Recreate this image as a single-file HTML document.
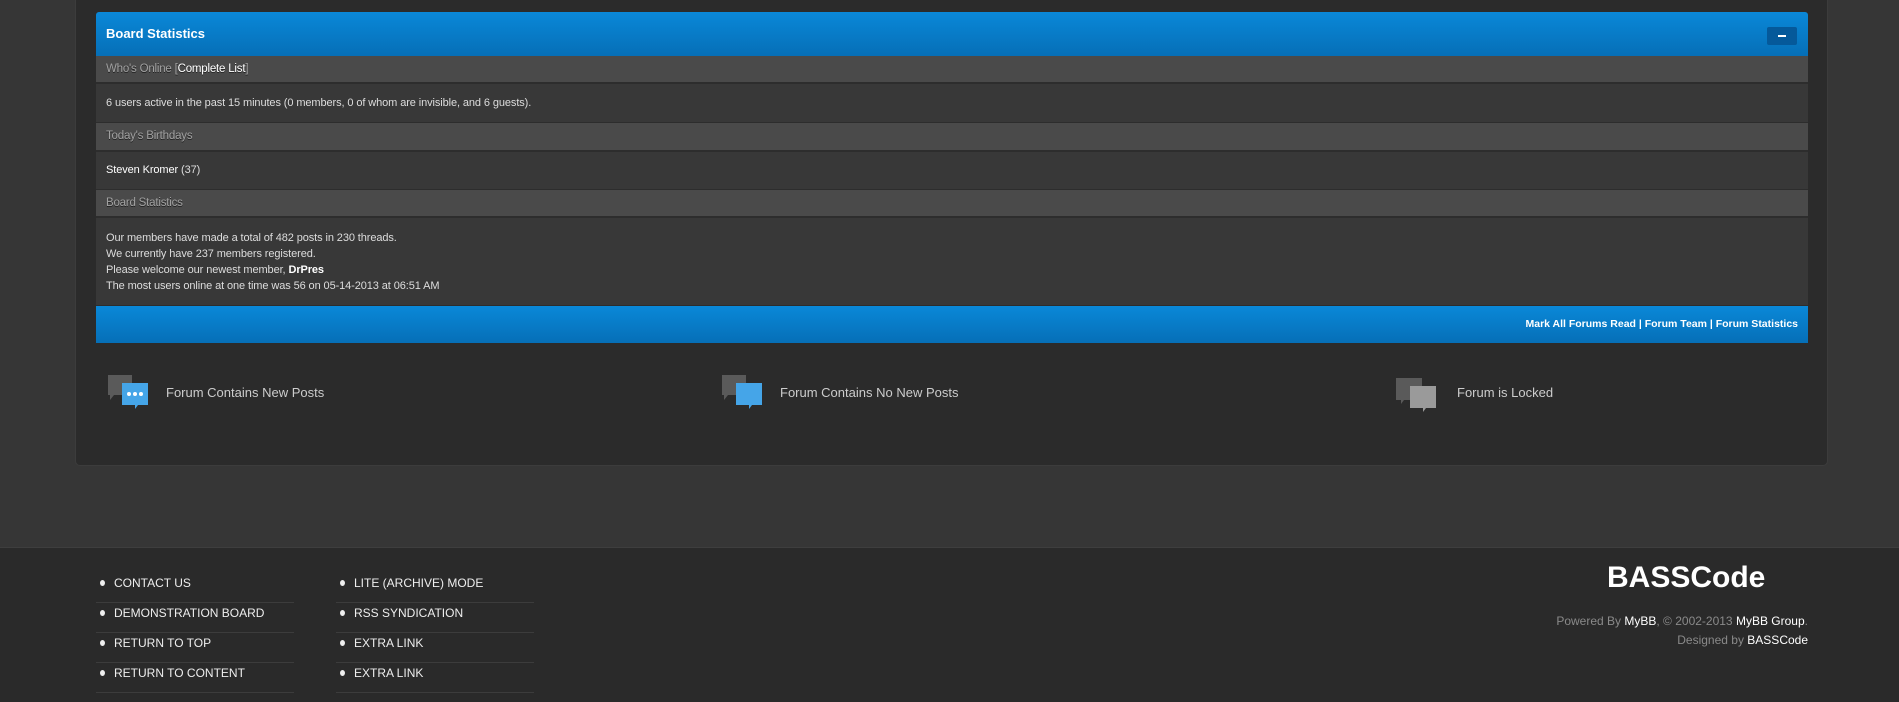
<!DOCTYPE html>
<html><head><meta charset="utf-8"><style>
*{margin:0;padding:0;box-sizing:border-box}
body{width:1899px;height:702px;overflow:hidden;background:#363636;font-family:"Liberation Sans",sans-serif;position:relative}
.panel{position:absolute;left:75px;top:-10px;width:1753px;height:476px;background:#2b2b2b;border:1px solid #3c3c3c;border-radius:0 0 5px 5px}
.tbl{position:absolute;left:96px;top:12px;width:1712px}
.head{height:44px;background:linear-gradient(#0a88d8,#066fb7);border-radius:3px 3px 0 0;position:relative;color:#fff;font-weight:bold;font-size:13px;line-height:44px;padding-left:10px}
.btn{position:absolute;left:1671px;top:15px;width:30px;height:18px;background:#05599a;border-radius:2px}
.btn:after{content:"";position:absolute;left:11px;top:8px;width:8px;height:2px;background:#fff}
.th{background:#4a4a4a;color:#a0a0a0;font-size:11.5px;padding-left:10px;border-bottom:2px solid #2d2d2d;text-shadow:0 1px 0 #222;letter-spacing:-0.2px}
.td{background:#383838;color:#ddd;font-size:11px;padding-left:10px;border-bottom:1px solid #2d2d2d;letter-spacing:-0.1px}
.foot{position:absolute;left:96px;top:306px;width:1712px;height:37px;background:linear-gradient(#0a88d8,#066fb7);color:#fff;font-size:10.5px;font-weight:bold;text-align:right;padding-right:10px;line-height:37px}
.leg{position:absolute;color:#ccc;font-size:13px;top:385px}
.ft{position:absolute;left:0;top:547px;width:1899px;height:155px;background:#2a2a2a;border-top:1px solid #3e3e3e}
.col{position:absolute;top:573px;width:198px}
.col div{height:30px;border-bottom:1px solid #3c3c3c;color:#eee;font-size:12px;line-height:20px;padding-left:18px;position:relative}
.col div:before{content:"";position:absolute;left:4px;top:7px;width:5px;height:6px;border-radius:50%;background:#eee}
.logo{position:absolute;left:1607px;top:561px;font-weight:bold;font-size:30px;color:#fff}
.cp{position:absolute;right:91px;top:612px;text-align:right;font-size:12px;color:#8a8a8a;line-height:19px}
.cp b{color:#fff;font-weight:normal}
</style></head><body>
<div class="panel"></div>
<div class="tbl">
<div class="head">Board Statistics<div class="btn"></div></div>
<div class="th" style="height:28px;line-height:26px">Who's Online [<span style="color:#fff">Complete List</span>]</div>
<div class="td" style="height:39px;line-height:38px">6 users active in the past 15 minutes (0 members, 0 of whom are invisible, and 6 guests).</div>
<div class="th" style="height:29px;line-height:27px">Today's Birthdays</div>
<div class="td" style="height:38px;line-height:37px"><span style="color:#fff">Steven Kromer</span> (37)</div>
<div class="th" style="height:28px;line-height:26px">Board Statistics</div>
<div class="td" style="height:88px;padding-top:12px;line-height:16px">Our members have made a total of 482 posts in 230 threads.<br>We currently have 237 members registered.<br>Please welcome our newest member, <b style="color:#fff">DrPres</b><br>The most users online at one time was 56 on 05-14-2013 at 06:51 AM</div>
</div>
<div class="foot">Mark All Forums Read | Forum Team | Forum Statistics</div>

<svg style="position:absolute;left:104px;top:372px" width="46" height="40"><path d="M4 3h24v20H10l-4 5v-5H4z" fill="#5a5a5a"/><path d="M18 11h26v22H34l-3 4v-4H18z" fill="#45a5e8"/><circle cx="25" cy="22" r="2" fill="#fff"/><circle cx="31" cy="22" r="2" fill="#fff"/><circle cx="37" cy="22" r="2" fill="#fff"/></svg>
<div class="leg" style="left:166px">Forum Contains New Posts</div>
<svg style="position:absolute;left:718px;top:372px" width="46" height="40"><path d="M4 3h24v20H10l-4 5v-5H4z" fill="#5a5a5a"/><path d="M18 11h26v22H34l-3 4v-4H18z" fill="#45a5e8"/></svg>
<div class="leg" style="left:780px">Forum Contains No New Posts</div>
<svg style="position:absolute;left:1394px;top:372px" width="46" height="40"><path d="M2 6h26v22H10l-3 4v-4H2z" fill="#5a5a5a"/><path d="M16 14h26v22H32l-3 4v-4H16z" fill="#9a9a9a"/></svg>
<div class="leg" style="left:1457px">Forum is Locked</div>

<div class="ft"></div>
<div class="col" style="left:96px"><div>CONTACT US</div><div>DEMONSTRATION BOARD</div><div>RETURN TO TOP</div><div>RETURN TO CONTENT</div></div>
<div class="col" style="left:336px"><div>LITE (ARCHIVE) MODE</div><div>RSS SYNDICATION</div><div>EXTRA LINK</div><div>EXTRA LINK</div></div>
<div class="logo">BASSCode</div>
<div class="cp">Powered By <b>MyBB</b>, © 2002-2013 <b>MyBB Group</b>.<br>Designed by <b>BASSCode</b></div>
</body></html>
